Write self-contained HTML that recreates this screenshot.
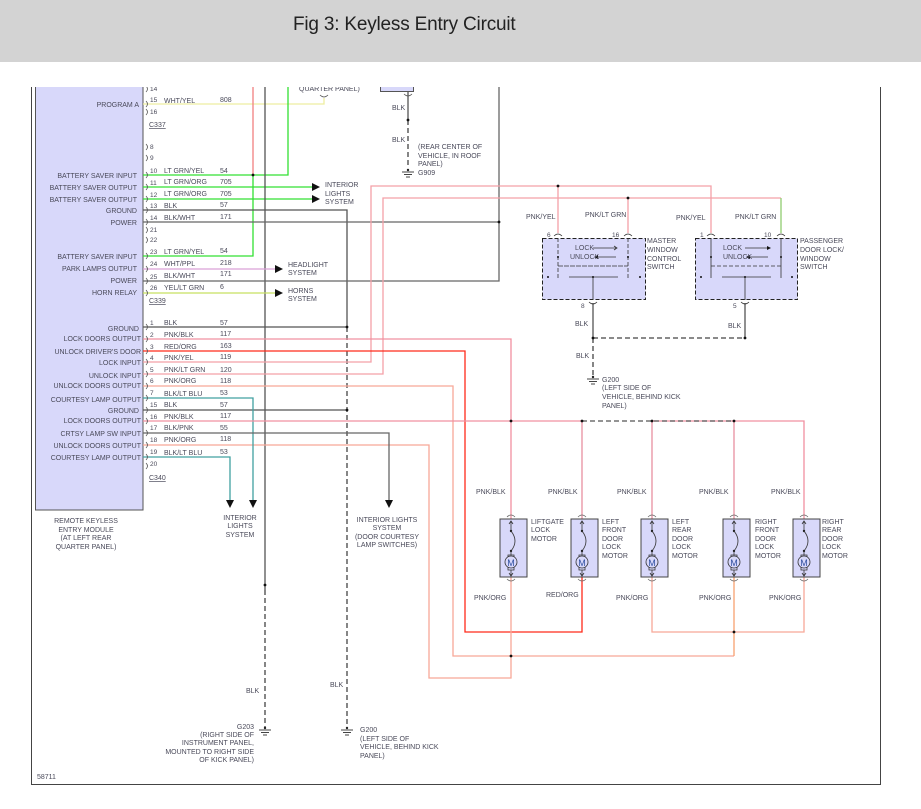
<!DOCTYPE html>
<html><head><meta charset="utf-8"><style>
html,body{margin:0;padding:0;background:#fff;}
body{width:921px;height:809px;overflow:hidden;position:relative;font-family:"Liberation Sans",Arial,sans-serif;}
#hdr{position:absolute;left:0;top:0;width:921px;height:62px;background:#d3d3d3;z-index:2;}
#hdr span{position:absolute;left:293px;top:14px;font-size:19px;color:#222;letter-spacing:-0.2px;}
svg{position:absolute;left:0;top:0;}
text{font-family:"Liberation Sans",Arial,sans-serif;font-size:7px;fill:#4a4a5a;}
.r{text-anchor:end;}
.m{text-anchor:middle;}
.p{font-size:6.5px;}
</style></head><body>
<div id="hdr"><span>Fig 3: Keyless Entry Circuit</span></div>
<svg width="921" height="809" viewBox="0 0 921 809">
<defs>
<symbol id="mot" overflow="visible">
<rect x="-11" y="0" width="27" height="58" fill="#d8d8fa" stroke="#444" stroke-width="1"/>
<path d="M-4,-2 Q0,-6 4,-2 M-4,60 Q0,64 4,60" fill="none" stroke="#666" stroke-width="0.8"/>
<path d="M0,2 V12 M-2,5 L0,2 L2,5" fill="none" stroke="#333" stroke-width="0.8"/>
<circle cx="0" cy="12" r="1.2" fill="#222"/>
<path d="M0,12 Q8,22 0,32" fill="none" stroke="#333" stroke-width="0.8"/>
<circle cx="0" cy="32" r="1.2" fill="#222"/>
<path d="M0,32 V36 M-3,36 H3 V39 H-3 Z M-3,48 H3 V51 H-3 Z M0,51 V57 M-2,54 L0,57 L2,54" fill="none" stroke="#333" stroke-width="0.8"/>
<circle cx="0" cy="43" r="6" fill="#d8d8fa" stroke="#333" stroke-width="0.8"/>
</symbol>
<symbol id="gnd" overflow="visible">
<path d="M-6,0 H6 M-4,2.5 H4 M-2,5 H2" stroke="#444" stroke-width="0.9"/>
<circle cx="0" cy="-2" r="1.2" fill="#222"/>
</symbol>
</defs>
<!-- frame -->
<line x1="31.5" y1="87" x2="31.5" y2="785" stroke="#444" stroke-width="1"/>
<line x1="880.5" y1="87" x2="880.5" y2="785" stroke="#444" stroke-width="1"/>
<line x1="31" y1="784.5" x2="881" y2="784.5" stroke="#444" stroke-width="1"/>
<!-- module -->
<rect x="35.5" y="80" width="107.5" height="430" fill="#d8d8fa" stroke="#555" stroke-width="1"/>
<rect x="380.5" y="80" width="33" height="11.5" fill="#d8d8fa" stroke="#555" stroke-width="1"/>

<g fill="none" stroke-width="1.3">
<path d="M143,104 H324 V98" stroke="#eeeea0"/>
<path d="M253,80 V175" stroke="#f08080"/>
<path d="M143,175 H288 V80" stroke="#33e033"/>
<path d="M253,175 V256 H143" stroke="#33e033"/>
<path d="M143,187 H312 M143,199 H312" stroke="#33e033"/>
<path d="M265,80 V590" stroke="#555"/>
<path d="M265,590 V728" stroke="#444" stroke-dasharray="5,3"/>
<path d="M143,210 H347 V327" stroke="#555"/>
<path d="M347,327 V728" stroke="#444" stroke-dasharray="5,3"/>
<path d="M143,222 H499 M499,80 V281 H143" stroke="#666"/>
<path d="M143,269 H275" stroke="#d9a0d8"/>
<path d="M143,293 H275" stroke="#c8e060"/>
<path d="M408,92 V120" stroke="#555"/>
<path d="M408,120 V168" stroke="#444" stroke-dasharray="5,3"/>
<path d="M143,362 H371 V186 H711 V233" stroke="#f4a0a8"/>
<path d="M143,374 H383 V198 H781" stroke="#f4a0a8"/>
<path d="M781,198 V233" stroke="#90cc70"/>
<path d="M558,186 V233 M628,198 V233" stroke="#f4a0a8"/>
<path d="M143,327 H347 M143,410 H347" stroke="#555"/>
<path d="M143,339 H511 V519" stroke="#f090a0"/>
<path d="M143,351 H465 V632 H582 V577" stroke="#ff2a1a"/>
<path d="M143,386 H453 V656 H734" stroke="#f8a898"/>
<path d="M734,577 V656" stroke="#f8a070"/>
<path d="M652,577 V632 H804 V577" stroke="#f8a898"/>
<path d="M143,445 H429 V678 H511 V577" stroke="#f8a898"/>
<path d="M143,398 H253 V500 M143,457 H230 V500" stroke="#40a0a0"/>
<path d="M143,433 H389 V500" stroke="#666"/>
<path d="M143,421 H582 M652,421 H734 M734,421 H804 V519" stroke="#f090a0"/>
<path d="M582,421 H734" stroke="#555" stroke-dasharray="5,3"/>
<path d="M582,421 V519 M652,421 V519 M734,421 V519" stroke="#e890a0"/>
<path d="M593,303 V338 M745,303 V338" stroke="#555"/>
<path d="M593,338 H745 M593,338 V376" stroke="#444" stroke-dasharray="5,3"/>
</g>
<g fill="#111">
<path d="M312,183 L320,187 L312,191Z M312,195 L320,199 L312,203Z M275,265 L283,269 L275,273Z M275,289 L283,293 L275,297Z"/>
<path d="M226,500 L230,508 L234,500Z M249,500 L253,508 L257,500Z M385,500 L389,508 L393,500Z"/>
</g>
<g fill="#111">
<circle cx="253" cy="175" r="1.4"/><circle cx="499" cy="222" r="1.4"/><circle cx="408" cy="120" r="1.4"/>
<circle cx="347" cy="327" r="1.4"/><circle cx="347" cy="410" r="1.4"/>
<circle cx="558" cy="186" r="1.4"/><circle cx="628" cy="198" r="1.4"/>
<circle cx="593" cy="338" r="1.4"/><circle cx="745" cy="338" r="1.4"/>
<circle cx="511" cy="421" r="1.4"/><circle cx="582" cy="421" r="1.4"/><circle cx="652" cy="421" r="1.4"/><circle cx="734" cy="421" r="1.4"/>
<circle cx="511" cy="656" r="1.4"/><circle cx="734" cy="632" r="1.4"/><circle cx="265" cy="585" r="1.4"/>
</g>
<g fill="none" stroke="#555" stroke-width="0.8">
<path d="M146,86 q3,3 0,6 M146,101 q3,3 0,6 M146,109 q3,3 0,6 M146,144 q3,3 0,6 M146,155 q3,3 0,6 M146,172 q3,3 0,6 M146,184 q3,3 0,6 M146,196 q3,3 0,6 M146,207 q3,3 0,6 M146,219 q3,3 0,6 M146,227 q3,3 0,6 M146,237 q3,3 0,6 M146,253 q3,3 0,6 M146,266 q3,3 0,6 M146,278 q3,3 0,6 M146,290 q3,3 0,6"/>
<path d="M146,324 q3,3 0,6 M146,336 q3,3 0,6 M146,348 q3,3 0,6 M146,359 q3,3 0,6 M146,371 q3,3 0,6 M146,383 q3,3 0,6 M146,395 q3,3 0,6 M146,407 q3,3 0,6 M146,418 q3,3 0,6 M146,430 q3,3 0,6 M146,442 q3,3 0,6 M146,454 q3,3 0,6 M146,463 q3,3 0,6"/>
<path d="M320,95 q4,4 8,0 M404,94 q4,4 8,0"/>
</g>
<g>
<rect x="542.5" y="238.5" width="103" height="61" fill="#d8d8fa" stroke="#222" stroke-dasharray="4,2"/>
<rect x="695.5" y="238.5" width="102" height="61" fill="#d8d8fa" stroke="#222" stroke-dasharray="4,2"/>
<g fill="none" stroke="#333" stroke-width="0.8">
<path d="M558,238 V278 M628,238 V278 M558,266 H628 M559,266 H628" stroke-dasharray="4,2"/>
<path d="M569,277 H618 M593,277 V300 M711,238 V278 M781,238 V278 M722,277 H771 M745,277 V300"/>
<path d="M711,266 H781" stroke-dasharray="4,2"/>
<path d="M593,248 H616 M614,246 L617,248 L614,250 M616,257 H597 M745,248 H768 M768,257 H749"/>
<path d="M554,236 q4,-4 8,0 M624,236 q4,-4 8,0 M707,236 q4,-4 8,0 M777,236 q4,-4 8,0 M589,302 q4,4 8,0 M741,302 q4,4 8,0"/>
</g>
<g fill="#111"><circle cx="548" cy="277" r="1"/><circle cx="640" cy="277" r="1"/><circle cx="701" cy="277" r="1"/><circle cx="792" cy="277" r="1"/>
<circle cx="558" cy="257" r="1"/><circle cx="628" cy="257" r="1"/><circle cx="711" cy="257" r="1"/><circle cx="781" cy="257" r="1"/>
<circle cx="593" cy="277" r="1"/><circle cx="745" cy="277" r="1"/>
<path d="M598,255 L594,257 L598,259Z M750,255 L746,257 L750,259Z M767,246 L771,248 L767,250Z"/></g>
<text x="575" y="250">LOCK</text><text x="570" y="259">UNLOCK</text>
<text x="723" y="250">LOCK</text><text x="723" y="259">UNLOCK</text>
<text x="647" y="243">MASTER</text><text x="647" y="252">WINDOW</text><text x="647" y="261">CONTROL</text><text x="647" y="269">SWITCH</text>
<text x="800" y="243">PASSENGER</text><text x="800" y="252">DOOR LOCK/</text><text x="800" y="261">WINDOW</text><text x="800" y="269">SWITCH</text>
<text class="p" x="547" y="237">6</text><text class="p" x="612" y="237">16</text><text class="p" x="700" y="237">1</text><text class="p" x="764" y="237">10</text>
<text class="p" x="581" y="308">8</text><text class="p" x="733" y="308">5</text>
<text x="526" y="219">PNK/YEL</text><text x="585" y="217">PNK/LT GRN</text>
<text x="676" y="220">PNK/YEL</text><text x="735" y="219">PNK/LT GRN</text>
<text x="575" y="326">BLK</text><text x="728" y="328">BLK</text><text x="576" y="358">BLK</text>
</g>
<use href="#mot" x="511" y="519"/><use href="#mot" x="582" y="519"/><use href="#mot" x="652" y="519"/><use href="#mot" x="734" y="519"/><use href="#mot" x="804" y="519"/>
<g><text x="511" y="566" class="m" style="font-size:9px;fill:#3050a0">M</text><text x="582" y="566" class="m" style="font-size:9px;fill:#3050a0">M</text><text x="652" y="566" class="m" style="font-size:9px;fill:#3050a0">M</text><text x="734" y="566" class="m" style="font-size:9px;fill:#3050a0">M</text><text x="804" y="566" class="m" style="font-size:9px;fill:#3050a0">M</text></g>
<text x="531" y="524">LIFTGATE</text><text x="531" y="532">LOCK</text><text x="531" y="541">MOTOR</text>
<text x="602" y="524">LEFT</text><text x="602" y="532">FRONT</text><text x="602" y="541">DOOR</text><text x="602" y="549">LOCK</text><text x="602" y="558">MOTOR</text>
<text x="672" y="524">LEFT</text><text x="672" y="532">REAR</text><text x="672" y="541">DOOR</text><text x="672" y="549">LOCK</text><text x="672" y="558">MOTOR</text>
<text x="755" y="524">RIGHT</text><text x="755" y="532">FRONT</text><text x="755" y="541">DOOR</text><text x="755" y="549">LOCK</text><text x="755" y="558">MOTOR</text>
<text x="822" y="524">RIGHT</text><text x="822" y="532">REAR</text><text x="822" y="541">DOOR</text><text x="822" y="549">LOCK</text><text x="822" y="558">MOTOR</text>
<text x="476" y="494">PNK/BLK</text><text x="548" y="494">PNK/BLK</text><text x="617" y="494">PNK/BLK</text><text x="699" y="494">PNK/BLK</text><text x="771" y="494">PNK/BLK</text>
<text x="474" y="600">PNK/ORG</text><text x="546" y="597">RED/ORG</text><text x="616" y="600">PNK/ORG</text><text x="699" y="600">PNK/ORG</text><text x="769" y="600">PNK/ORG</text>
<use href="#gnd" x="408" y="172"/><use href="#gnd" x="593" y="379"/><use href="#gnd" x="265" y="730"/><use href="#gnd" x="347" y="730"/>
<text x="392" y="110">BLK</text><text x="392" y="142">BLK</text>
<text x="418" y="149">(REAR CENTER OF</text><text x="418" y="158">VEHICLE, IN ROOF</text><text x="418" y="166">PANEL)</text><text x="418" y="175">G909</text>
<text x="602" y="382">G200</text><text x="602" y="390">(LEFT SIDE OF</text><text x="602" y="399">VEHICLE, BEHIND KICK</text><text x="602" y="408">PANEL)</text>
<text x="246" y="693">BLK</text><text x="330" y="687">BLK</text>
<text class="r" x="254" y="729">G203</text><text class="r" x="254" y="737">(RIGHT SIDE OF</text><text class="r" x="254" y="745">INSTRUMENT PANEL,</text><text class="r" x="254" y="754">MOUNTED TO RIGHT SIDE</text><text class="r" x="254" y="762">OF KICK PANEL)</text>
<text x="360" y="732">G200</text><text x="360" y="741">(LEFT SIDE OF</text><text x="360" y="749">VEHICLE, BEHIND KICK</text><text x="360" y="758">PANEL)</text>
<text x="37" y="779">58711</text>
<text x="299" y="91">QUARTER PANEL)</text>
<text x="325" y="187">INTERIOR</text><text x="325" y="196">LIGHTS</text><text x="325" y="204">SYSTEM</text>
<text x="288" y="267">HEADLIGHT</text><text x="288" y="275">SYSTEM</text>
<text x="288" y="293">HORNS</text><text x="288" y="301">SYSTEM</text>
<text class="m" x="240" y="520">INTERIOR</text><text class="m" x="240" y="528">LIGHTS</text><text class="m" x="240" y="537">SYSTEM</text>
<text class="m" x="387" y="522">INTERIOR LIGHTS</text><text class="m" x="387" y="530">SYSTEM</text><text class="m" x="387" y="539">(DOOR COURTESY</text><text class="m" x="387" y="547">LAMP SWITCHES)</text>
<text class="m" x="86" y="523">REMOTE KEYLESS</text><text class="m" x="86" y="532">ENTRY MODULE</text><text class="m" x="86" y="540">(AT LEFT REAR</text><text class="m" x="86" y="549">QUARTER PANEL)</text>
<g>
<text class="r" x="139" y="107">PROGRAM A</text>
<text class="r" x="137" y="178">BATTERY SAVER INPUT</text>
<text class="r" x="137" y="190">BATTERY SAVER OUTPUT</text>
<text class="r" x="137" y="202">BATTERY SAVER OUTPUT</text>
<text class="r" x="137" y="213">GROUND</text>
<text class="r" x="137" y="225">POWER</text>
<text class="r" x="137" y="259">BATTERY SAVER INPUT</text>
<text class="r" x="137" y="271">PARK LAMPS OUTPUT</text>
<text class="r" x="137" y="283">POWER</text>
<text class="r" x="137" y="295">HORN RELAY</text>
<text class="r" x="139" y="331">GROUND</text>
<text class="r" x="141" y="341">LOCK DOORS OUTPUT</text>
<text class="r" x="141" y="354">UNLOCK DRIVER'S DOOR</text>
<text class="r" x="141" y="365">LOCK INPUT</text>
<text class="r" x="141" y="378">UNLOCK INPUT</text>
<text class="r" x="141" y="388">UNLOCK DOORS OUTPUT</text>
<text class="r" x="141" y="402">COURTESY LAMP OUTPUT</text>
<text class="r" x="139" y="413">GROUND</text>
<text class="r" x="141" y="423">LOCK DOORS OUTPUT</text>
<text class="r" x="141" y="436">CRTSY LAMP SW INPUT</text>
<text class="r" x="141" y="448">UNLOCK DOORS OUTPUT</text>
<text class="r" x="141" y="460">COURTESY LAMP OUTPUT</text>
</g>
<g>
<text class="p" x="150" y="91">14</text><text class="p" x="150" y="102">15</text><text x="164" y="103">WHT/YEL</text><text x="220" y="102">808</text><text class="p" x="150" y="114">16</text>
<text x="149" y="127" style="text-decoration:underline">C337</text>
<text class="p" x="150" y="149">8</text><text class="p" x="150" y="160">9</text>
<text class="p" x="150" y="173">10</text><text x="164" y="173">LT GRN/YEL</text><text x="220" y="173">54</text>
<text class="p" x="150" y="185">11</text><text x="164" y="184">LT GRN/ORG</text><text x="220" y="184">705</text>
<text class="p" x="150" y="197">12</text><text x="164" y="196">LT GRN/ORG</text><text x="220" y="196">705</text>
<text class="p" x="150" y="208">13</text><text x="164" y="208">BLK</text><text x="220" y="207">57</text>
<text class="p" x="150" y="220">14</text><text x="164" y="220">BLK/WHT</text><text x="220" y="219">171</text>
<text class="p" x="150" y="232">21</text><text class="p" x="150" y="242">22</text>
<text class="p" x="150" y="254">23</text><text x="164" y="254">LT GRN/YEL</text><text x="220" y="253">54</text>
<text class="p" x="150" y="266">24</text><text x="164" y="266">WHT/PPL</text><text x="220" y="265">218</text>
<text class="p" x="150" y="279">25</text><text x="164" y="278">BLK/WHT</text><text x="220" y="276">171</text>
<text class="p" x="150" y="290">26</text><text x="164" y="290">YEL/LT GRN</text><text x="220" y="289">6</text>
<text x="149" y="303" style="text-decoration:underline">C339</text>
<text class="p" x="150" y="325">1</text><text x="164" y="325">BLK</text><text x="220" y="325">57</text>
<text class="p" x="150" y="337">2</text><text x="164" y="337">PNK/BLK</text><text x="220" y="336">117</text>
<text class="p" x="150" y="349">3</text><text x="164" y="349">RED/ORG</text><text x="220" y="348">163</text>
<text class="p" x="150" y="360">4</text><text x="164" y="360">PNK/YEL</text><text x="220" y="359">119</text>
<text class="p" x="150" y="372">5</text><text x="164" y="372">PNK/LT GRN</text><text x="220" y="372">120</text>
<text class="p" x="150" y="383">6</text><text x="164" y="383">PNK/ORG</text><text x="220" y="383">118</text>
<text class="p" x="150" y="395">7</text><text x="164" y="396">BLK/LT BLU</text><text x="220" y="395">53</text>
<text class="p" x="150" y="407">15</text><text x="164" y="407">BLK</text><text x="220" y="407">57</text>
<text class="p" x="150" y="419">16</text><text x="164" y="419">PNK/BLK</text><text x="220" y="418">117</text>
<text class="p" x="150" y="430">17</text><text x="164" y="430">BLK/PNK</text><text x="220" y="430">55</text>
<text class="p" x="150" y="442">18</text><text x="164" y="442">PNK/ORG</text><text x="220" y="441">118</text>
<text class="p" x="150" y="454">19</text><text x="164" y="455">BLK/LT BLU</text><text x="220" y="454">53</text>
<text class="p" x="150" y="466">20</text>
<text x="149" y="480" style="text-decoration:underline">C340</text>
</g>
<!-- clip cover for top of diagram -->
<rect x="0" y="62" width="921" height="25" fill="#fff"/>
</svg>
</body></html>
